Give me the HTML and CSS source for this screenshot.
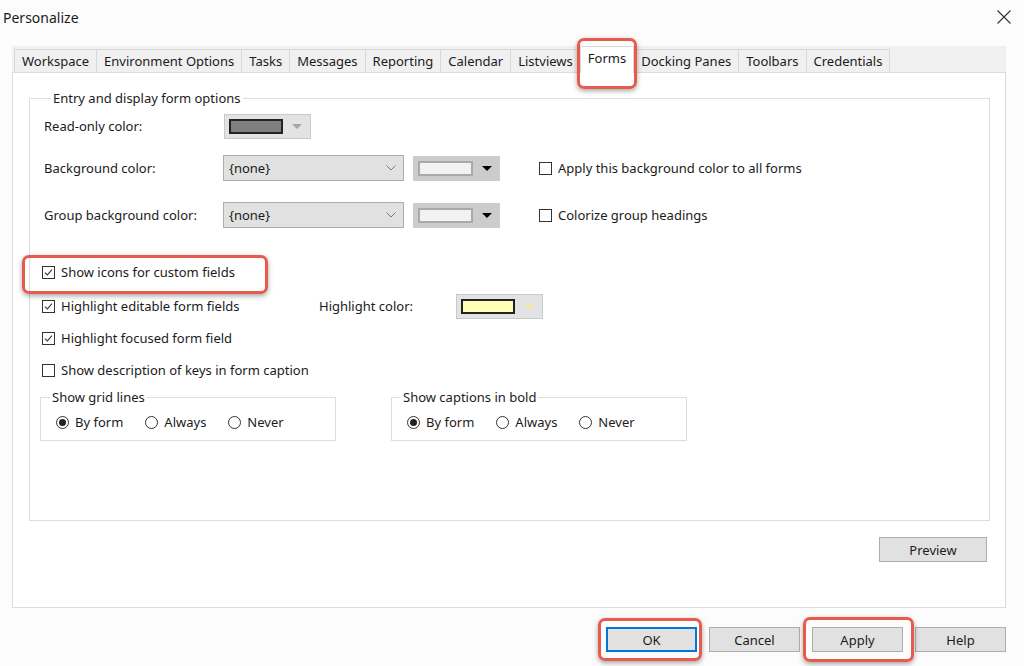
FILE: index.html
```html
<!DOCTYPE html>
<html lang="en">

<head>
    <meta charset="UTF-8">
    <title>Personalize</title>
    <link rel="stylesheet" href="styles.css">
</head>

<body>
    <div class="window">
        <div class="titlebar">
            <span class="title">Personalize</span>
            <svg class="close" width="16" height="16" viewBox="0 0 16 16">
                <path d="M1.5 1.5 L14.5 14.5 M14.5 1.5 L1.5 14.5" stroke="#333" stroke-width="1.1" fill="none" />
            </svg>
        </div>

        <div class="tabs-area">
            <div class="tab-strip">
                <div class="tab">Workspace</div>
                <div class="tab">Environment Options</div>
                <div class="tab">Tasks</div>
                <div class="tab">Messages</div>
                <div class="tab">Reporting</div>
                <div class="tab">Calendar</div>
                <div class="tab">Listviews</div>
                <div class="tab active mark mark-tab">Forms</div>
                <div class="tab">Docking Panes</div>
                <div class="tab">Toolbars</div>
                <div class="tab">Credentials</div>
            </div>

            <div class="panel">
                <fieldset class="group main-group">
                    <legend>Entry and display form options</legend>

                    <div class="field-row row-readonly">
                        <span class="label">Read-only color:</span>
                        <div class="color-pick disabled">
                            <span class="swatch swatch-gray"></span>
                            <span class="tri tri-gray"></span>
                        </div>
                    </div>

                    <div class="field-row row-bg">
                        <span class="label">Background color:</span>
                        <div class="combo">
                            <span>{none}</span>
                            <svg width="10" height="6" viewBox="0 0 10 6"><path d="M0.5 0.5 L5 5 L9.5 0.5" stroke="#7a7a7a" fill="none" /></svg>
                        </div>
                        <div class="color-pick">
                            <span class="swatch swatch-light"></span>
                            <span class="tri"></span>
                        </div>
                        <label class="check check-after-pick">
                            <span class="box"></span>
                            Apply this background color to all forms
                        </label>
                    </div>

                    <div class="field-row row-groupbg">
                        <span class="label">Group background color:</span>
                        <div class="combo">
                            <span>{none}</span>
                            <svg width="10" height="6" viewBox="0 0 10 6"><path d="M0.5 0.5 L5 5 L9.5 0.5" stroke="#7a7a7a" fill="none" /></svg>
                        </div>
                        <div class="color-pick">
                            <span class="swatch swatch-light"></span>
                            <span class="tri"></span>
                        </div>
                        <label class="check check-after-pick">
                            <span class="box"></span>
                            Colorize group headings
                        </label>
                    </div>

                    <div class="check-row row-icons">
                        <label class="check mark mark-icons">
                            <span class="box"><svg width="13" height="13" viewBox="0 0 13 13"><path d="M2.3 6.6 L5.2 9.4 L10.6 3.2" stroke="#333" stroke-width="1.2" fill="none" /></svg></span>
                            Show icons for custom fields
                        </label>
                    </div>

                    <div class="check-row row-editable">
                        <label class="check check-cell">
                            <span class="box"><svg width="13" height="13" viewBox="0 0 13 13"><path d="M2.3 6.6 L5.2 9.4 L10.6 3.2" stroke="#333" stroke-width="1.2" fill="none" /></svg></span>
                            Highlight editable form fields
                        </label>
                        <span class="hl-label">Highlight color:</span>
                        <div class="color-pick disabled">
                            <span class="swatch swatch-yellow"></span>
                            <span class="tri tri-yellow"></span>
                        </div>
                    </div>

                    <div class="check-row row-focused">
                        <label class="check">
                            <span class="box"><svg width="13" height="13" viewBox="0 0 13 13"><path d="M2.3 6.6 L5.2 9.4 L10.6 3.2" stroke="#333" stroke-width="1.2" fill="none" /></svg></span>
                            Highlight focused form field
                        </label>
                    </div>

                    <div class="check-row row-desc">
                        <label class="check">
                            <span class="box"></span>
                            Show description of keys in form caption
                        </label>
                    </div>

                    <div class="sub-groups">
                        <fieldset class="group sub-group">
                            <legend>Show grid lines</legend>
                            <div class="radios">
                                <label class="radio"><span class="dot on"></span>By form</label>
                                <label class="radio"><span class="dot"></span>Always</label>
                                <label class="radio"><span class="dot"></span>Never</label>
                            </div>
                        </fieldset>
                        <fieldset class="group sub-group">
                            <legend>Show captions in bold</legend>
                            <div class="radios">
                                <label class="radio"><span class="dot on"></span>By form</label>
                                <label class="radio"><span class="dot"></span>Always</label>
                                <label class="radio"><span class="dot"></span>Never</label>
                            </div>
                        </fieldset>
                    </div>
                </fieldset>

                <div class="preview-row">
                    <button type="button" class="btn btn-preview">Preview</button>
                </div>
            </div>
        </div>

        <div class="footer">
            <button type="button" class="btn btn-ok mark mark-ok">OK</button>
            <button type="button" class="btn">Cancel</button>
            <button type="button" class="btn mark mark-apply">Apply</button>
            <button type="button" class="btn">Help</button>
        </div>
    </div>
</body>

</html>
```

FILE: styles.css
```css
:root {
    --text-color: #1b1b1b;
    --line-color: #dcdcdc;
    --group-line: #dddddd;
    --btn-bg: #e1e1e1;
    --btn-border: #adadad;
    --pick-bg: #cccccc;
    --mark-color: #e85a4c;
    --focus-color: #0078d7;
}

body {
    margin: 0;
    background-color: #fcfcfc;
    font-family: "Noto Sans", "Liberation Sans", sans-serif;
    font-size: 13px;
    color: var(--text-color);
}

.window {
    width: 1024px;
    height: 666px;
    overflow: hidden;
}

.titlebar {
    height: 34px;
    display: flex;
    align-items: center;
    justify-content: space-between;
    padding: 0 12px 0 3px;
}

.title {
    font-size: 14px;
}

.tabs-area {
    width: 994px;
    margin: 12px 0 0 12px;
}

/* tabs */
.tab-strip {
    display: flex;
    align-items: flex-end;
    height: 26px;
    padding-left: 2px;
    background-color: #f0f0f0;
}

.tab {
    height: 23px;
    padding: 0 7px;
    margin-right: -1px;
    display: flex;
    align-items: center;
    box-sizing: border-box;
    border: 1px solid #d9d9d9;
    border-bottom: none;
    background-color: #f0f0f0;
    white-space: nowrap;
}

.tab.active {
    height: 27px;
    margin-bottom: -1px;
    align-items: flex-start;
    padding-top: 2px;
    background-color: #ffffff;
    position: relative;
    z-index: 2;
}

.panel {
    height: 536px;
    box-sizing: border-box;
    padding: 17px 15px 0 16px;
    background-color: #ffffff;
    border: 1px solid var(--line-color);
}

/* group boxes */
.group {
    margin: 0;
    padding: 0;
    border: 1px solid var(--group-line);
    min-width: 0;
}

.group legend {
    padding: 0 2px;
    line-height: 17px;
}

.main-group {
    height: 431px;
    box-sizing: border-box;
    padding: 0 14px;
}

.main-group > legend {
    margin-left: 7px;
}

.field-row {
    display: flex;
    align-items: center;
}

.label {
    width: 179px;
    flex-shrink: 0;
}

.row-readonly {
    margin-top: 7px;
    height: 24px;
}

.row-readonly .color-pick {
    margin-left: 1px;
}

.row-bg {
    margin-top: 17px;
    height: 26px;
}

.row-groupbg {
    margin-top: 21px;
    height: 26px;
}

.combo {
    width: 181px;
    height: 26px;
    box-sizing: border-box;
    display: flex;
    align-items: center;
    justify-content: space-between;
    padding: 0 7px 0 5px;
    background-color: var(--btn-bg);
    border: 1px solid var(--btn-border);
}

.color-pick {
    width: 87px;
    height: 25px;
    box-sizing: border-box;
    display: flex;
    align-items: center;
    padding: 0 8px 0 5px;
    gap: 9px;
    background-color: var(--pick-bg);
}

.combo + .color-pick {
    margin-left: 9px;
}

.color-pick.disabled {
    background-color: #e3e3e3;
    border: 1px solid #c9c9c9;
    padding-left: 4px;
}

.swatch {
    width: 57px;
    height: 15px;
    box-sizing: border-box;
}

.swatch-light {
    background-color: #f2f2f2;
    border: 2px solid #a9a9a9;
}

.swatch-gray {
    width: 60px;
    background-color: #7f7f7f;
    border: 2px solid #222222;
}

.swatch-yellow {
    width: 59px;
    background-color: #ffffb5;
    border: 2px solid #222222;
}

.tri {
    width: 0;
    height: 0;
    border-left: 5px solid transparent;
    border-right: 5px solid transparent;
    border-top: 5px solid #000000;
}

.tri-gray {
    border-top-color: #a6a6a6;
}

.tri-yellow {
    border-top-color: #f4eaa6;
}

/* checkboxes */
.check {
    display: inline-flex;
    align-items: center;
    gap: 6px;
    white-space: nowrap;
}

.box {
    width: 13px;
    height: 13px;
    box-sizing: border-box;
    border: 1px solid #333333;
    background-color: #ffffff;
    display: flex;
    align-items: center;
    justify-content: center;
}

.box svg {
    display: block;
}

.check-after-pick {
    margin-left: 39px;
}

.check-row {
    display: flex;
    align-items: center;
    margin-left: -2px;
}

.row-icons {
    margin-top: 34px;
    height: 20px;
}

.row-editable {
    margin-top: 12px;
    height: 24px;
}

.check-cell {
    width: 277px;
}

.hl-label {
    width: 137px;
}

.row-focused {
    margin-top: 10px;
    height: 20px;
}

.row-desc {
    margin-top: 12px;
    height: 20px;
}

/* radio groups */
.sub-groups {
    display: flex;
    gap: 55px;
    margin: 9px 0 0 -4px;
}

.sub-group {
    width: 296px;
    height: 52px;
    box-sizing: border-box;
}

.sub-group legend {
    margin-left: 9px;
}

.radios {
    display: flex;
    gap: 22px;
    padding: 7px 0 0 15px;
}

.radio {
    display: inline-flex;
    align-items: center;
    gap: 6px;
}

.dot {
    width: 13px;
    height: 13px;
    box-sizing: border-box;
    border: 1px solid #333333;
    border-radius: 50%;
    background-color: #ffffff;
    display: flex;
    align-items: center;
    justify-content: center;
}

.dot.on::before {
    content: '';
    width: 7px;
    height: 7px;
    border-radius: 50%;
    background-color: #222222;
}

/* buttons */
.btn {
    height: 25px;
    width: 91px;
    padding: 0;
    font-family: inherit;
    font-size: 13px;
    color: var(--text-color);
    background-color: var(--btn-bg);
    border: 1px solid var(--btn-border);
}

.preview-row {
    display: flex;
    justify-content: flex-end;
    margin: 16px 3px 0 0;
}

.btn-preview {
    width: 108px;
}

.footer {
    display: flex;
    justify-content: flex-end;
    gap: 12px;
    margin: 19px 18px 0 0;
}

.btn-ok {
    border: 2px solid var(--focus-color);
}

/* annotation boxes */
.mark {
    position: relative;
}

.mark::after {
    content: '';
    position: absolute;
    border: 3px solid var(--mark-color);
    border-radius: 7px;
    box-shadow: 0 2px 5px rgba(0, 0, 0, 0.35);
    pointer-events: none;
    z-index: 3;
}

.mark-tab::after {
    top: -9px;
    bottom: -16px;
    left: -4px;
    right: -4px;
}

.mark-icons::after {
    top: -8px;
    bottom: -13px;
    left: -20px;
    right: -33px;
}

.mark-ok::after {
    top: -11px;
    bottom: -11px;
    left: -10px;
    right: -7px;
}

.mark-apply::after {
    top: -11px;
    bottom: -11px;
    left: -10px;
    right: -12px;
}
```
